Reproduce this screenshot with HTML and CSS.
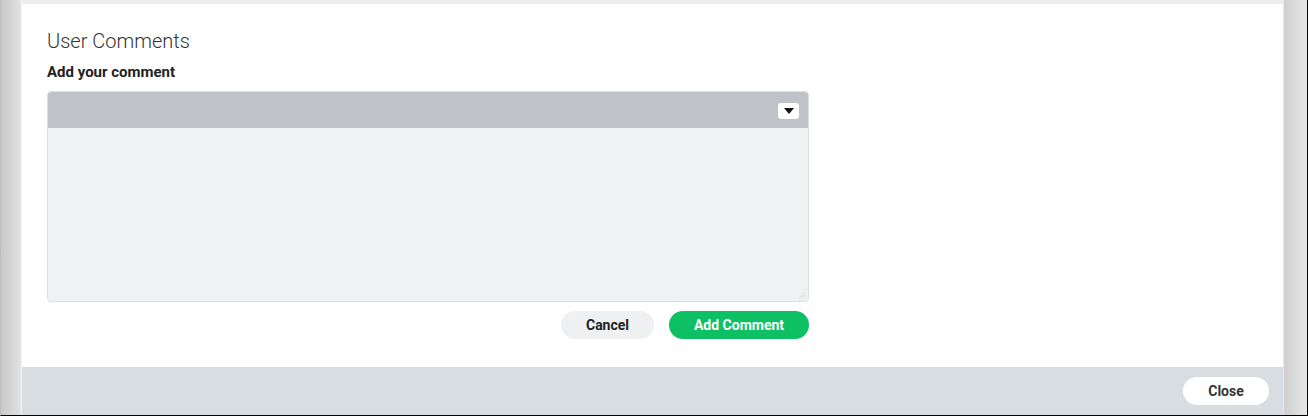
FILE: index.html
```html
<!DOCTYPE html>
<html>
<head>
<meta charset="utf-8">
<link rel="stylesheet" href="styles.css">
</head>
<body>
<div class="frame">
  <div class="gutter gutter-left"></div>
  <div class="modal">
    <div class="modal-top"></div>
    <div class="modal-body">
      <h2 class="title">User Comments</h2>
      <div class="label">Add your comment</div>
      <div class="editor">
        <div class="toolbar">
          <button class="dropdown" aria-label="More">
            <svg width="10" height="6" viewBox="0 0 10 6"><path d="M0 0h10L5 6z" fill="#111"/></svg>
          </button>
        </div>
        <div class="editor-area">
          <svg class="resize" width="8" height="8" viewBox="0 0 8 8"><path d="M7 1L1 7M7 4L4 7" stroke="#d6d8da" stroke-width="1"/></svg>
        </div>
      </div>
      <div class="actions">
        <button class="btn btn-cancel">Cancel</button>
        <button class="btn btn-primary">Add Comment</button>
      </div>
    </div>
    <div class="modal-footer">
      <button class="btn btn-close">Close</button>
    </div>
  </div>
  <div class="gutter gutter-right"></div>
</div>
</body>
</html>
```

FILE: styles.css
```css
html, body {
  margin: 0;
  padding: 0;
  background: #ffffff;
}
body {
  font-family: Roboto, "Liberation Sans", sans-serif;
  width: 1308px;
  height: 416px;
  overflow: hidden;
}
.frame {
  display: flex;
  width: 1308px;
  height: 416px;
  box-sizing: border-box;
  border-right: 1px solid #000;
  border-bottom: 1px solid #000;
  border-left: 1px solid #bdbdbd;
}
.gutter {
  flex: none;
  height: 100%;
}
.gutter-left {
  width: 20px;
  background: linear-gradient(to right, #c9c9c9, #dcdcdc 80%, #e3e3e3);
  border-right: 1px solid #f4f4f4;
}
.gutter-right {
  width: 23px;
  border-left: 1px solid #e8e8e8;
  background: linear-gradient(to right, #cfcfcf, #e4e4e4 90%, #e8e8e8);
}
.modal {
  flex: 1;
  display: flex;
  flex-direction: column;
  background: #fff;
  min-width: 0;
}
.modal-top {
  height: 4px;
  background: #ededed;
  flex: none;
}
.modal-body {
  flex: 1;
  padding: 25px 0 0 25px;
}
.title {
  margin: 0;
  font-size: 20px;
  font-weight: 300;
  color: #333;
  line-height: 24px;
}
.label {
  margin-top: 10px;
  font-size: 15px;
  font-weight: 700;
  color: #222;
  line-height: 18px;
}
.editor {
  margin-top: 10px;
  width: 762px;
  height: 211px;
  box-sizing: border-box;
  border: 1px solid #dcdedf;
  border-radius: 4px;
  display: flex;
  flex-direction: column;
  overflow: hidden;
}
.toolbar {
  height: 36px;
  flex: none;
  background: #bfc3c7;
  display: flex;
  align-items: center;
  justify-content: flex-end;
  padding-right: 9px;
}
.dropdown {
  width: 21px;
  height: 16px;
  border: none;
  border-radius: 3px;
  background: #fff;
  padding: 0;
  display: flex;
  align-items: center;
  justify-content: center;
  margin-top: 1px;
}
.editor-area {
  flex: 1;
  background: #f0f1f2;
  position: relative;
}
.resize {
  position: absolute;
  right: 2px;
  bottom: 2px;
}
.actions {
  width: 762px;
  display: flex;
  justify-content: flex-end;
  gap: 15px;
  margin-top: 9px;
}
.btn {
  font-family: Roboto, "Liberation Sans", sans-serif;
  font-size: 14px;
  font-weight: 700;
  height: 28px;
  border: none;
  border-radius: 14px;
  padding: 0;
  line-height: 28px;
}
.btn-cancel {
  width: 93px;
  background: #eef0f2;
  color: #222;
}
.btn-primary {
  width: 140px;
  background: #0cc063;
  color: #fff;
}
.modal-footer {
  height: 48px;
  flex: none;
  background: #d7dde0;
  display: flex;
  justify-content: flex-end;
  align-items: center;
  padding-right: 14px;
}
.btn-close {
  width: 86px;
  background: #fff;
  color: #333;
  margin-top: 0;
}
```
